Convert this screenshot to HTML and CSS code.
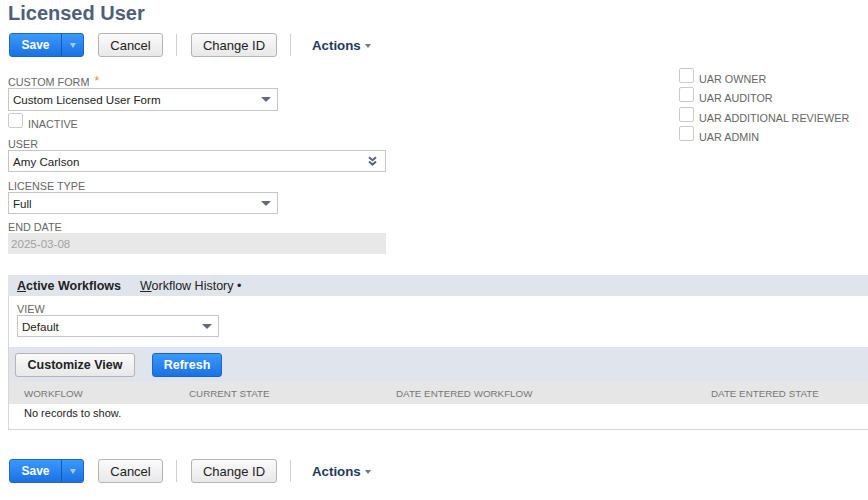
FILE: index.html
```html
<!DOCTYPE html>
<html>
<head>
<meta charset="utf-8">
<link rel="stylesheet" href="styles.css">
</head>
<body>
<div class="page">
  <h1 class="title">Licensed User</h1>

  <div class="action-bar">
    <div class="btn-save"><span class="save-main">Save</span><span class="save-arrow"><i class="tri-light"></i></span></div>
    <button class="btn-gray btn-cancel">Cancel</button>
    <span class="sep"></span>
    <button class="btn-gray btn-change">Change ID</button>
    <span class="sep sep-2"></span>
    <span class="actions-menu">Actions<i class="tri-small"></i></span>
  </div>

  <div class="form">
    <div class="col-left">
      <div class="field">
        <div class="label">Custom Form<span class="req">*</span></div>
        <div class="select w-short h-23"><span class="val">Custom Licensed User Form</span><i class="caret"></i></div>
      </div>
      <div class="check-row inactive-row"><span class="cb"></span><span class="cb-label">Inactive</span></div>
      <div class="field f-user">
        <div class="label">User</div>
        <div class="select w-long"><span class="val">Amy Carlson</span>
          <svg class="dbl" width="9" height="10" viewBox="0 0 9 10"><path d="M1 1.2 L4.5 4.2 L8 1.2 M1 5.6 L4.5 8.6 L8 5.6" stroke="#56657b" stroke-width="2" fill="none"/></svg>
        </div>
      </div>
      <div class="field f-license">
        <div class="label">License Type</div>
        <div class="select w-short"><span class="val">Full</span><i class="caret"></i></div>
      </div>
      <div class="field f-date">
        <div class="label">End Date</div>
        <div class="date-field w-long">2025-03-08</div>
      </div>
    </div>
    <div class="col-right">
      <div class="check-row uar"><span class="cb"></span><span class="cb-label">UAR Owner</span></div>
      <div class="check-row uar"><span class="cb"></span><span class="cb-label">UAR Auditor</span></div>
      <div class="check-row uar"><span class="cb"></span><span class="cb-label">UAR Additional Reviewer</span></div>
      <div class="check-row uar"><span class="cb"></span><span class="cb-label">UAR Admin</span></div>
    </div>
  </div>

  <div class="subtabs">
    <div class="tabbar">
      <span class="tab active"><u>A</u>ctive Workflows</span>
      <span class="tab"><u>W</u>orkflow History •</span>
    </div>
    <div class="tab-body">
      <div class="view-panel">
        <div class="label">View</div>
        <div class="select w-view"><span class="val">Default</span><i class="caret"></i></div>
      </div>
      <div class="list-bar">
        <button class="btn-gray btn-customize">Customize View</button>
        <button class="btn-blue btn-refresh">Refresh</button>
      </div>
      <div class="grid-row grid-head">
        <span>Workflow</span><span>Current State</span><span>Date Entered Workflow</span><span>Date Entered State</span>
      </div>
      <div class="grid-row grid-empty"><span>No records to show.</span></div>
    </div>
  </div>

  <div class="action-bar bottom-bar">
    <div class="btn-save"><span class="save-main">Save</span><span class="save-arrow"><i class="tri-light"></i></span></div>
    <button class="btn-gray btn-cancel">Cancel</button>
    <span class="sep"></span>
    <button class="btn-gray btn-change">Change ID</button>
    <span class="sep sep-2"></span>
    <span class="actions-menu">Actions<i class="tri-small"></i></span>
  </div>
</div>
</body>
</html>
```

FILE: styles.css
```css
* { box-sizing: border-box; }

body {
  margin: 0;
  background: #ffffff;
  font-family: "Liberation Sans", Arial, sans-serif;
  color: #222222;
}

.page {
  padding: 0 0 0 8px;
}

.title {
  margin: 0;
  padding-top: 1px;
  font-size: 20px;
  line-height: 24px;
  font-weight: bold;
  color: #4d5f79;
}

/* ---------- action bar ---------- */
.action-bar {
  display: flex;
  align-items: center;
  height: 24px;
  margin-top: 8px;
}

.bottom-bar {
  margin-top: 29px;
}

.btn-save {
  display: flex;
  height: 24px;
  margin-left: 1px;
  border: 1px solid #1a66cc;
  border-radius: 3px;
  background: linear-gradient(#3b99fb, #1a72e3);
  color: #ffffff;
}

.save-main {
  width: 51px;
  display: flex;
  align-items: center;
  justify-content: center;
  font-size: 12px;
  font-weight: bold;
}

.save-arrow {
  width: 22px;
  border-left: 1px solid #1659b4;
  display: flex;
  align-items: center;
  justify-content: center;
}

.tri-light {
  width: 0;
  height: 0;
  border-left: 3px solid transparent;
  border-right: 3px solid transparent;
  border-top: 5px solid #a6cbf6;
}

button {
  font-family: "Liberation Sans", Arial, sans-serif;
  margin: 0;
  padding: 0;
  cursor: pointer;
}

.btn-gray {
  height: 24px;
  border: 1px solid #b4b4b4;
  border-radius: 3px;
  background: linear-gradient(#fbfbfb, #e8e8e8);
  color: #222222;
  font-size: 13px;
}

.btn-blue {
  height: 24px;
  border: 1px solid #1a66cc;
  border-radius: 3px;
  background: linear-gradient(#3b99fb, #1a72e3);
  color: #ffffff;
  font-size: 12.5px;
  font-weight: bold;
}

.btn-cancel {
  width: 65px;
  margin-left: 14px;
}

.btn-change {
  width: 86px;
  margin-left: 14px;
}

.sep {
  width: 1px;
  height: 22px;
  margin-left: 13px;
  background: #cfcfcf;
}

.sep-2 {
  margin-left: 13px;
}

.actions-menu {
  margin-left: 21px;
  font-size: 13.3px;
  font-weight: bold;
  color: #24385b;
  display: flex;
  align-items: center;
}

.tri-small {
  width: 0;
  height: 0;
  margin-left: 4px;
  margin-top: 1px;
  border-left: 3.5px solid transparent;
  border-right: 3.5px solid transparent;
  border-top: 4px solid #6d7888;
}

/* ---------- form ---------- */
.form {
  display: grid;
  grid-template-columns: 378px 1fr;
  column-gap: 293px;
  margin-top: 11px;
}

.col-left {
  padding-top: 7px;
}

.label {
  font-size: 10.8px;
  line-height: 12px;
  color: #666666;
  text-transform: uppercase;
}

.req {
  color: #e58a2a;
  font-size: 12px;
  margin-left: 5px;
  vertical-align: 1px;
}

.select {
  height: 22px;
  border: 1px solid #c6c6c6;
  background: #ffffff;
  display: flex;
  align-items: center;
  padding-left: 4px;
  font-size: 11.6px;
  color: #222222;
}

.h-23 { height: 23px; }
.w-short { width: 270px; }
.w-long { width: 378px; }
.w-view { width: 202px; }

.caret {
  margin-left: auto;
  margin-right: 6px;
  width: 0;
  height: 0;
  border-left: 5px solid transparent;
  border-right: 5px solid transparent;
  border-top: 5px solid #5e6a7c;
}

.dbl {
  margin-left: auto;
  margin-right: 8px;
}

.check-row {
  display: flex;
  align-items: flex-start;
  gap: 5px;
}

.cb {
  flex: none;
  width: 15px;
  height: 15px;
  border: 1px solid #cacaca;
  border-radius: 2px;
  background: #ffffff;
}

.cb-label {
  font-size: 10.8px;
  line-height: 12px;
  padding-top: 5px;
  color: #666666;
  text-transform: uppercase;
}

.inactive-row {
  margin-top: 2px;
}

.f-user { margin-top: 8px; }
.f-license { margin-top: 8px; }
.f-date { margin-top: 7px; }

.date-field {
  height: 21px;
  background: #e8e8e8;
  display: flex;
  align-items: center;
  padding-left: 3px;
  font-size: 11.6px;
  color: #a2a2a2;
}

.col-right {
  display: flex;
  flex-direction: column;
}

.uar {
  height: 19.4px;
  gap: 5px;
}

/* ---------- subtabs ---------- */
.subtabs {
  margin-top: 21px;
}

.tabbar {
  height: 21px;
  background: #e0e5ed;
  display: flex;
  align-items: center;
  padding-left: 9px;
  gap: 19px;
  font-size: 12.5px;
  color: #222222;
}

.tab.active {
  font-weight: bold;
}

.tab-body {
  border-left: 1px solid #d6d6d6;
  border-bottom: 1px solid #d6d6d6;
}

.view-panel {
  padding: 7px 0 10px 8px;
}

.list-bar {
  height: 35px;
  background: #e0e5ed;
  display: flex;
  align-items: center;
  padding-left: 6px;
  gap: 17px;
}

.btn-customize {
  width: 120px;
  font-size: 12.5px;
  font-weight: bold;
}

.btn-refresh {
  width: 70px;
}

.grid-row {
  display: grid;
  grid-template-columns: 165px 207px 315px 1fr;
}

.grid-row span {
  padding-left: 15px;
}

.grid-head {
  height: 22px;
  background: #e6e6e6;
  align-items: center;
  font-size: 9.8px;
  color: #777777;
  text-transform: uppercase;
}

.grid-empty {
  height: 25px;
  padding-top: 2px;
  font-size: 11px;
  line-height: 14px;
  color: #222222;
}

.grid-empty span {
  grid-column: 1 / -1;
}
```
